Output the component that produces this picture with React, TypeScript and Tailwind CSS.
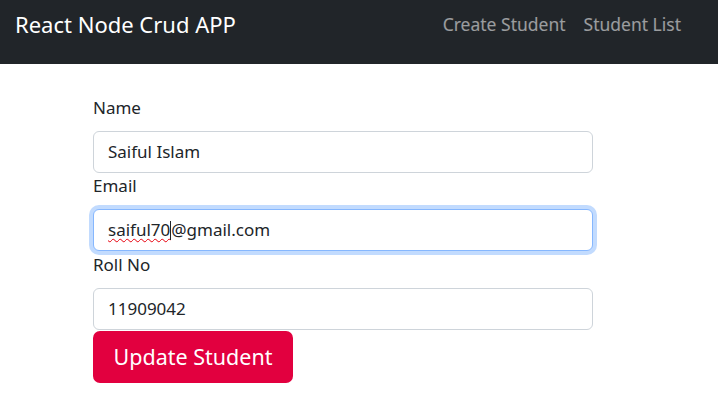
const font = { fontFamily: '"Noto Sans", "Open Sans", sans-serif' }

function Field({ label, children, focused }: { label: string; children: React.ReactNode; focused?: boolean }) {
  return (
    <div>
      <label className="mb-[10px] block h-[26px] text-[17px] leading-[26px] text-[#212529]">{label}</label>
      <div
        className={`flex h-[42px] w-[500px] items-center rounded-[6px] border bg-white px-[14px] text-[17px] text-[#212529] ${
          focused ? 'border-[#86b7fe] shadow-[0_0_0_4px_rgba(13,110,253,0.25)]' : 'border-[#ced4da]'
        }`}
      >
        {children}
      </div>
    </div>
  )
}

export default function App() {
  return (
    <div className="min-h-[416px] bg-white" style={font}>
      <nav className="h-16 bg-[#212529] pl-[15px] pr-[37px] pt-[9px]">
        <div className="flex h-[30px] items-center justify-between">
          <span className="text-[22px] leading-[30px] text-white">React Node Crud APP</span>
          <div className="flex gap-[18px] text-[17.5px] text-white/55">
            <span>Create Student</span>
            <span>Student List</span>
          </div>
        </div>
      </nav>
      <form className="ml-[93px] pt-[31px]">
        <Field label="Name">Saiful Islam</Field>
        <Field label="Email" focused>
          <span className="underline decoration-wavy decoration-red-600 decoration-1 underline-offset-2">saiful70</span>
          <span className="inline-block h-[19px] w-px bg-[#212529]" />
          <span>@gmail.com</span>
        </Field>
        <div className="h-px" />
        <Field label="Roll No">11909042</Field>
        <button
          type="button"
          className="mt-px flex h-[52px] w-[200px] items-center justify-center rounded-[7px] bg-[#e2003f] text-[21.5px] text-white"
        >
          Update Student
        </button>
      </form>
    </div>
  )
}
